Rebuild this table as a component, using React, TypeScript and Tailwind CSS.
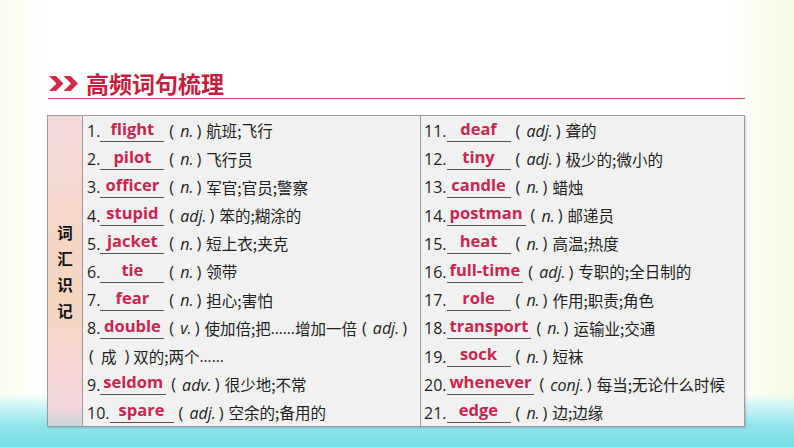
import React from "react";

type Item = { n: number; word: string; pos: string; zh: string };

const LEFT: Item[] = [
  { n: 1, word: "flight", pos: "n.", zh: "航班;飞行" },
  { n: 2, word: "pilot", pos: "n.", zh: "飞行员" },
  { n: 3, word: "officer", pos: "n.", zh: "军官;官员;警察" },
  { n: 4, word: "stupid", pos: "adj.", zh: "笨的;糊涂的" },
  { n: 5, word: "jacket", pos: "n.", zh: "短上衣;夹克" },
  { n: 6, word: "tie", pos: "n.", zh: "领带" },
  { n: 7, word: "fear", pos: "n.", zh: "担心;害怕" },
  { n: 8, word: "double", pos: "v.", zh: "使加倍;把" },
];

const LEFT_END: Item[] = [
  { n: 9, word: "seldom", pos: "adv.", zh: "很少地;不常" },
  { n: 10, word: "spare", pos: "adj.", zh: "空余的;备用的" },
];

const RIGHT: Item[] = [
  { n: 11, word: "deaf", pos: "adj.", zh: "聋的" },
  { n: 12, word: "tiny", pos: "adj.", zh: "极少的;微小的" },
  { n: 13, word: "candle", pos: "n.", zh: "蜡烛" },
  { n: 14, word: "postman", pos: "n.", zh: "邮递员" },
  { n: 15, word: "heat", pos: "n.", zh: "高温;热度" },
  { n: 16, word: "full-time", pos: "adj.", zh: "专职的;全日制的" },
  { n: 17, word: "role", pos: "n.", zh: "作用;职责;角色" },
  { n: 18, word: "transport", pos: "n.", zh: "运输业;交通" },
  { n: 19, word: "sock", pos: "n.", zh: "短袜" },
  { n: 20, word: "whenever", pos: "conj.", zh: "每当;无论什么时候" },
  { n: 21, word: "edge", pos: "n.", zh: "边;边缘" },
];

const CJK = "font-['Noto_Sans_CJK_SC',sans-serif]";

function Pos({ p }: { p: string }) {
  return (
    <span className="inline-flex items-center text-[16.5px]">
      <span className="pl-[5px]">(</span>
      <span className="italic text-[16px] pl-[6px] pr-[3px]">{p}</span>
      <span className="pr-[5px]">)</span>
    </span>
  );
}

function Row({ it, tail }: { it: Item; tail?: React.ReactNode }) {
  return (
    <div className="flex items-center h-[28.2px] whitespace-nowrap">
      <span className="text-[16px]">{it.n}.</span>
      <span className="inline-block min-w-[64px] h-[21px] leading-[16px] border-b border-[#555] text-center px-[3px] text-[16.5px] font-bold text-[#c8264f]">
        {it.word}
      </span>
      <Pos p={it.pos} />
      <span className={CJK}>{it.zh}</span>
      {tail}
    </div>
  );
}

export default function App() {
  return (
    <div className="w-[794px] h-[447px] overflow-hidden bg-[linear-gradient(to_bottom,rgba(255,255,255,0)_0%,rgba(255,255,255,0)_88%,#cdf4f6_91%,#92e6ec_95%,#78dce6_100%),linear-gradient(to_right,#fbfcef_0%,#ffffff_6%,#ffffff_92%,#f6fae2_100%)] font-['Open_Sans','Noto_Sans_CJK_SC',sans-serif] text-[#1e1e1e]">
      <div className="pt-[71px] pl-[48px]">
        <div className="flex items-center h-[25px]">
          <svg width="30" height="15" viewBox="0 0 30 15" className="ml-[1px]">
            <polygon points="0,0 7,0 14.5,7.5 7,15 0,15 7.5,7.5" fill="#d12b4b" />
            <polygon points="14.5,0 21.5,0 29,7.5 21.5,15 14.5,15 22,7.5" fill="#d12b4b" />
          </svg>
          <span className="ml-[7px] text-[23px] font-bold leading-none text-[#c41f40] font-['Noto_Sans_CJK_SC',sans-serif]">高频词句梳理</span>
        </div>
        <div className="mt-[2px] w-[697px] h-px bg-[#c24a64]" />
        <div className="mt-[16px] ml-[-1px] w-[698px] h-[312px] flex border border-[#9c9c9c] bg-[#f1f1f1] shadow-[1px_1px_2px_rgba(0,0,0,0.18)] text-[15.5px]">
          <div className="w-[35px] shrink-0 border-r border-[#9c9c9c] bg-[linear-gradient(to_bottom,#f4d9dc_0%,#f5d6c4_40%,#f5d6c0_60%,#f4d5dc_94%,#c9d3dc_100%)] flex flex-col items-center justify-center">
            {["词", "汇", "识", "记"].map((c) => (
              <div key={c} className={`h-[26px] leading-[26px] font-bold text-[15.5px] text-[#111] ${CJK}`}>{c}</div>
            ))}
          </div>
          <div className="w-[338px] shrink-0 border-r border-[#9c9c9c] pl-[4px] pt-[1px]">
            {LEFT.map((it) => (
              <Row
                key={it.n}
                it={it}
                tail={
                  it.n === 8 ? (
                    <>
                      <span>……</span>
                      <span className={CJK}>增加一倍</span>
                      <Pos p="adj." />
                    </>
                  ) : undefined
                }
              />
            ))}
            <div className="flex items-center h-[28.2px] whitespace-nowrap">
              <span className="text-[16.5px] pl-[2px]">(</span>
              <span className={`${CJK} pl-[7px]`}>成</span>
              <span className="text-[16.5px] pl-[8px] pr-[4px]">)</span>
              <span className={CJK}>双的;两个</span>
              <span>……</span>
            </div>
            {LEFT_END.map((it) => (
              <Row key={it.n} it={it} />
            ))}
          </div>
          <div className="flex-1 pl-[3px] pt-[1px]">
            {RIGHT.map((it) => (
              <Row key={it.n} it={it} />
            ))}
          </div>
        </div>
      </div>
    </div>
  );
}
